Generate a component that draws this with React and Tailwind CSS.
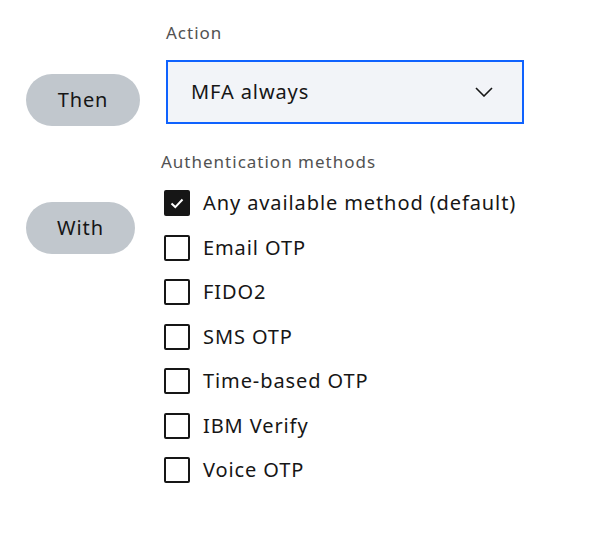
import React, { useState } from 'react';

const methods = [
  'Any available method (default)',
  'Email OTP',
  'FIDO2',
  'SMS OTP',
  'Time-based OTP',
  'IBM Verify',
  'Voice OTP',
];

const Pill = ({ children, className }) => (
  <div className={`h-[52px] rounded-full bg-[#c1c7cd] flex items-center justify-center text-[20px] tracking-[0.9px] text-[#161616] ${className}`}>
    {children}
  </div>
);

const App = () => {
  const [checked, setChecked] = useState({ 0: true });

  return (
    <div className="w-[594px] h-[550px] bg-white text-[#161616] font-['Noto_Sans',sans-serif] pt-[22px]">
      {/* Then row */}
      <div className="flex">
        <div className="w-[166px] pl-[26px] pt-[52px]">
          <Pill className="w-[114px]">Then</Pill>
        </div>
        <div>
          <div className="h-[22px] leading-[22px] text-[17px] tracking-[1px] text-[#525252] mb-[16px]">Action</div>
          <div className="w-[358px] h-[64px] border-2 border-[#0f62fe] bg-[#f2f4f8] flex items-center justify-between pl-[23px] pr-[29px]">
            <span className="text-[20px] tracking-[0.9px]">MFA always</span>
            <svg width="18" height="10" viewBox="0 0 18 10" fill="none">
              <path d="M1 1l8 8 8-8" stroke="#161616" strokeWidth="1.6" />
            </svg>
          </div>
        </div>
      </div>

      {/* With row */}
      <div className="flex mt-[25px]">
        <div className="w-[161px] pl-[26px] pt-[51px]">
          <Pill className="w-[109px]">With</Pill>
        </div>
        <div>
          <div className="h-[22px] leading-[22px] text-[17px] tracking-[1px] text-[#525252] mb-[8px]">Authentication methods</div>
          <div className="flex flex-col pl-[3px]">
            {methods.map((m, i) => (
              <label key={m} className="h-[44.5px] flex items-center gap-[13px] cursor-pointer">
                <input
                  type="checkbox"
                  className="hidden"
                  checked={!!checked[i]}
                  onChange={() => setChecked({ ...checked, [i]: !checked[i] })}
                />
                {checked[i] ? (
                  <span className="w-[26px] h-[26px] rounded-[2px] bg-[#161616] flex items-center justify-center">
                    <svg width="14" height="11" viewBox="0 0 14 11" fill="none">
                      <path d="M1.5 5.5l3.8 3.6L12.5 1.5" stroke="white" strokeWidth="2" />
                    </svg>
                  </span>
                ) : (
                  <span className="w-[26px] h-[26px] rounded-[2px] border-2 border-[#161616]" />
                )}
                <span className="text-[20px] tracking-[0.9px]">{m}</span>
              </label>
            ))}
          </div>
        </div>
      </div>
    </div>
  );
};

export default App;
